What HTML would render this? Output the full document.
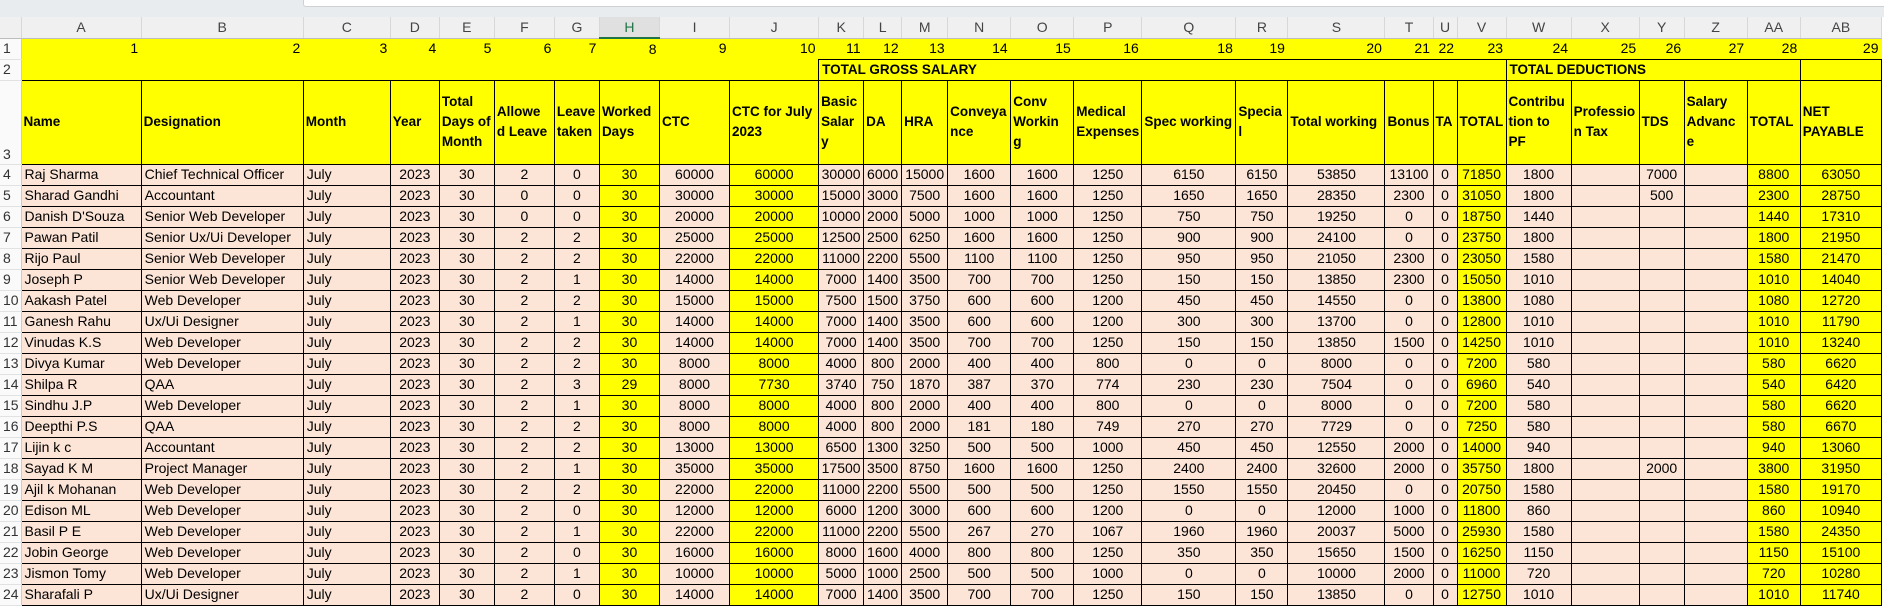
<!DOCTYPE html>
<html><head><meta charset="utf-8"><style>
*{box-sizing:border-box}
body{margin:0;width:1884px;height:606px;overflow:hidden;background:#fff;font-family:"Liberation Sans",sans-serif;position:relative}
#top{position:absolute;left:0;top:0;width:1884px;height:17px;background:#e9ecef}
#fb{position:absolute;left:303px;top:0;width:1581px;height:7px;background:#fff;border-bottom:1px solid #d0d0d0;border-left:1px solid #d0d0d0;border-bottom-left-radius:3px}
table{position:absolute;left:0;top:17px;border-collapse:collapse;table-layout:fixed;width:1882px}
td,th{padding:0 2px;height:21px;font-size:14px;white-space:nowrap;overflow:hidden;line-height:19px}
tr.ch th{background:#f0f0f0;color:#444;font-weight:normal;text-align:center;border-right:1px solid #d8d8d8;border-bottom:1px solid #bdbdbd;font-size:14px}
tr.ch th.sel{background:#e0e0e0;color:#217346;border-bottom:2px solid #217346}
th.rh{background:#fafafa;color:#333;font-weight:normal;text-align:left;padding-left:3px;border:none;border-right:1px solid #ccc;border-bottom:1px solid #e2e2e2;font-size:14px}
tr.r1 td{background:#ff0;text-align:right;padding-right:3px;border:none}
tr.r2 td{background:#ff0;border:none;border-bottom:1px solid #000}
tr.r2 td.b{border:1px solid #000;font-weight:bold;font-size:13.5px;padding-left:3px}
tr.r3 td{background:#ff0;border:1px solid #000;font-weight:bold;font-size:13.5px;line-height:20px;vertical-align:middle;padding-left:2px;height:84px}
tr.d td{background:#fce4d6;border:1px solid #000;text-align:center}
tr.d td.l{text-align:left;padding-left:3px}
tr.d td.y{background:#ff0}
</style></head><body>
<div id="top"><div id="fb"></div></div>
<table>
<colgroup>
<col style="width:21px"><col style="width:120px"><col style="width:162px"><col style="width:87px"><col style="width:49px"><col style="width:55px"><col style="width:60px"><col style="width:45px"><col style="width:60px"><col style="width:70px"><col style="width:89px"><col style="width:45px"><col style="width:38px"><col style="width:46px"><col style="width:63px"><col style="width:63px"><col style="width:68px"><col style="width:94px"><col style="width:52px"><col style="width:97px"><col style="width:48px"><col style="width:24px"><col style="width:49px"><col style="width:65px"><col style="width:68px"><col style="width:45px"><col style="width:63px"><col style="width:53px"><col style="width:81px">
</colgroup>
<tr class="ch"><th style="background:#f0f0f0"></th><th>A</th><th>B</th><th>C</th><th>D</th><th>E</th><th>F</th><th>G</th><th class="sel">H</th><th>I</th><th>J</th><th>K</th><th>L</th><th>M</th><th>N</th><th>O</th><th>P</th><th>Q</th><th>R</th><th>S</th><th>T</th><th>U</th><th>V</th><th>W</th><th>X</th><th>Y</th><th>Z</th><th>AA</th><th>AB</th></tr>
<tr class="r1"><th class="rh">1</th><td>1</td><td>2</td><td>3</td><td>4</td><td>5</td><td>6</td><td>7</td><td>8</td><td>9</td><td>10</td><td>11</td><td>12</td><td>13</td><td>14</td><td>15</td><td>16</td><td>18</td><td>19</td><td>20</td><td>21</td><td>22</td><td>23</td><td>24</td><td>25</td><td>26</td><td>27</td><td>28</td><td>29</td></tr>
<tr class="r2"><th class="rh">2</th><td></td><td></td><td></td><td></td><td></td><td></td><td></td><td></td><td></td><td></td><td class="b" colspan="12">TOTAL GROSS SALARY</td><td class="b" colspan="5">TOTAL DEDUCTIONS</td><td class="b"></td></tr>
<tr class="r3"><th class="rh" style="vertical-align:bottom;height:84px">3</th><td>Name</td><td>Designation</td><td>Month</td><td>Year</td><td>Total<br>Days of<br>Month</td><td>Allowe<br>d Leave</td><td>Leave<br>taken</td><td>Worked<br>Days</td><td>CTC</td><td>CTC for July<br>2023</td><td>Basic<br>Salar<br>y</td><td>DA</td><td>HRA</td><td>Conveya<br>nce</td><td>Conv<br>Workin<br>g</td><td>Medical<br>Expenses</td><td>Spec working</td><td>Specia<br>l</td><td>Total working</td><td>Bonus</td><td>TA</td><td>TOTAL</td><td>Contribu<br>tion to<br>PF</td><td>Professio<br>n Tax</td><td>TDS</td><td>Salary<br>Advanc<br>e</td><td>TOTAL</td><td>NET<br>PAYABLE</td></tr>
<tr class="d"><th class="rh">4</th><td class="l">Raj Sharma</td><td class="l">Chief Technical Officer</td><td class="l">July</td><td>2023</td><td>30</td><td>2</td><td>0</td><td class="y">30</td><td>60000</td><td class="y">60000</td><td>30000</td><td>6000</td><td>15000</td><td>1600</td><td>1600</td><td>1250</td><td>6150</td><td>6150</td><td>53850</td><td>13100</td><td>0</td><td class="y">71850</td><td>1800</td><td></td><td>7000</td><td></td><td class="y">8800</td><td class="y">63050</td></tr>
<tr class="d"><th class="rh">5</th><td class="l">Sharad Gandhi</td><td class="l">Accountant</td><td class="l">July</td><td>2023</td><td>30</td><td>0</td><td>0</td><td class="y">30</td><td>30000</td><td class="y">30000</td><td>15000</td><td>3000</td><td>7500</td><td>1600</td><td>1600</td><td>1250</td><td>1650</td><td>1650</td><td>28350</td><td>2300</td><td>0</td><td class="y">31050</td><td>1800</td><td></td><td>500</td><td></td><td class="y">2300</td><td class="y">28750</td></tr>
<tr class="d"><th class="rh">6</th><td class="l">Danish D'Souza</td><td class="l">Senior Web Developer</td><td class="l">July</td><td>2023</td><td>30</td><td>0</td><td>0</td><td class="y">30</td><td>20000</td><td class="y">20000</td><td>10000</td><td>2000</td><td>5000</td><td>1000</td><td>1000</td><td>1250</td><td>750</td><td>750</td><td>19250</td><td>0</td><td>0</td><td class="y">18750</td><td>1440</td><td></td><td></td><td></td><td class="y">1440</td><td class="y">17310</td></tr>
<tr class="d"><th class="rh">7</th><td class="l">Pawan Patil</td><td class="l">Senior Ux/Ui Developer</td><td class="l">July</td><td>2023</td><td>30</td><td>2</td><td>2</td><td class="y">30</td><td>25000</td><td class="y">25000</td><td>12500</td><td>2500</td><td>6250</td><td>1600</td><td>1600</td><td>1250</td><td>900</td><td>900</td><td>24100</td><td>0</td><td>0</td><td class="y">23750</td><td>1800</td><td></td><td></td><td></td><td class="y">1800</td><td class="y">21950</td></tr>
<tr class="d"><th class="rh">8</th><td class="l">Rijo Paul</td><td class="l">Senior Web Developer</td><td class="l">July</td><td>2023</td><td>30</td><td>2</td><td>2</td><td class="y">30</td><td>22000</td><td class="y">22000</td><td>11000</td><td>2200</td><td>5500</td><td>1100</td><td>1100</td><td>1250</td><td>950</td><td>950</td><td>21050</td><td>2300</td><td>0</td><td class="y">23050</td><td>1580</td><td></td><td></td><td></td><td class="y">1580</td><td class="y">21470</td></tr>
<tr class="d"><th class="rh">9</th><td class="l">Joseph P</td><td class="l">Senior Web Developer</td><td class="l">July</td><td>2023</td><td>30</td><td>2</td><td>1</td><td class="y">30</td><td>14000</td><td class="y">14000</td><td>7000</td><td>1400</td><td>3500</td><td>700</td><td>700</td><td>1250</td><td>150</td><td>150</td><td>13850</td><td>2300</td><td>0</td><td class="y">15050</td><td>1010</td><td></td><td></td><td></td><td class="y">1010</td><td class="y">14040</td></tr>
<tr class="d"><th class="rh">10</th><td class="l">Aakash Patel</td><td class="l">Web Developer</td><td class="l">July</td><td>2023</td><td>30</td><td>2</td><td>2</td><td class="y">30</td><td>15000</td><td class="y">15000</td><td>7500</td><td>1500</td><td>3750</td><td>600</td><td>600</td><td>1200</td><td>450</td><td>450</td><td>14550</td><td>0</td><td>0</td><td class="y">13800</td><td>1080</td><td></td><td></td><td></td><td class="y">1080</td><td class="y">12720</td></tr>
<tr class="d"><th class="rh">11</th><td class="l">Ganesh Rahu</td><td class="l">Ux/Ui Designer</td><td class="l">July</td><td>2023</td><td>30</td><td>2</td><td>1</td><td class="y">30</td><td>14000</td><td class="y">14000</td><td>7000</td><td>1400</td><td>3500</td><td>600</td><td>600</td><td>1200</td><td>300</td><td>300</td><td>13700</td><td>0</td><td>0</td><td class="y">12800</td><td>1010</td><td></td><td></td><td></td><td class="y">1010</td><td class="y">11790</td></tr>
<tr class="d"><th class="rh">12</th><td class="l">Vinudas K.S</td><td class="l">Web Developer</td><td class="l">July</td><td>2023</td><td>30</td><td>2</td><td>2</td><td class="y">30</td><td>14000</td><td class="y">14000</td><td>7000</td><td>1400</td><td>3500</td><td>700</td><td>700</td><td>1250</td><td>150</td><td>150</td><td>13850</td><td>1500</td><td>0</td><td class="y">14250</td><td>1010</td><td></td><td></td><td></td><td class="y">1010</td><td class="y">13240</td></tr>
<tr class="d"><th class="rh">13</th><td class="l">Divya Kumar</td><td class="l">Web Developer</td><td class="l">July</td><td>2023</td><td>30</td><td>2</td><td>2</td><td class="y">30</td><td>8000</td><td class="y">8000</td><td>4000</td><td>800</td><td>2000</td><td>400</td><td>400</td><td>800</td><td>0</td><td>0</td><td>8000</td><td>0</td><td>0</td><td class="y">7200</td><td>580</td><td></td><td></td><td></td><td class="y">580</td><td class="y">6620</td></tr>
<tr class="d"><th class="rh">14</th><td class="l">Shilpa R</td><td class="l">QAA</td><td class="l">July</td><td>2023</td><td>30</td><td>2</td><td>3</td><td class="y">29</td><td>8000</td><td class="y">7730</td><td>3740</td><td>750</td><td>1870</td><td>387</td><td>370</td><td>774</td><td>230</td><td>230</td><td>7504</td><td>0</td><td>0</td><td class="y">6960</td><td>540</td><td></td><td></td><td></td><td class="y">540</td><td class="y">6420</td></tr>
<tr class="d"><th class="rh">15</th><td class="l">Sindhu J.P</td><td class="l">Web Developer</td><td class="l">July</td><td>2023</td><td>30</td><td>2</td><td>1</td><td class="y">30</td><td>8000</td><td class="y">8000</td><td>4000</td><td>800</td><td>2000</td><td>400</td><td>400</td><td>800</td><td>0</td><td>0</td><td>8000</td><td>0</td><td>0</td><td class="y">7200</td><td>580</td><td></td><td></td><td></td><td class="y">580</td><td class="y">6620</td></tr>
<tr class="d"><th class="rh">16</th><td class="l">Deepthi P.S</td><td class="l">QAA</td><td class="l">July</td><td>2023</td><td>30</td><td>2</td><td>2</td><td class="y">30</td><td>8000</td><td class="y">8000</td><td>4000</td><td>800</td><td>2000</td><td>181</td><td>180</td><td>749</td><td>270</td><td>270</td><td>7729</td><td>0</td><td>0</td><td class="y">7250</td><td>580</td><td></td><td></td><td></td><td class="y">580</td><td class="y">6670</td></tr>
<tr class="d"><th class="rh">17</th><td class="l">Lijin k c</td><td class="l">Accountant</td><td class="l">July</td><td>2023</td><td>30</td><td>2</td><td>2</td><td class="y">30</td><td>13000</td><td class="y">13000</td><td>6500</td><td>1300</td><td>3250</td><td>500</td><td>500</td><td>1000</td><td>450</td><td>450</td><td>12550</td><td>2000</td><td>0</td><td class="y">14000</td><td>940</td><td></td><td></td><td></td><td class="y">940</td><td class="y">13060</td></tr>
<tr class="d"><th class="rh">18</th><td class="l">Sayad K M</td><td class="l">Project Manager</td><td class="l">July</td><td>2023</td><td>30</td><td>2</td><td>1</td><td class="y">30</td><td>35000</td><td class="y">35000</td><td>17500</td><td>3500</td><td>8750</td><td>1600</td><td>1600</td><td>1250</td><td>2400</td><td>2400</td><td>32600</td><td>2000</td><td>0</td><td class="y">35750</td><td>1800</td><td></td><td>2000</td><td></td><td class="y">3800</td><td class="y">31950</td></tr>
<tr class="d"><th class="rh">19</th><td class="l">Ajil k Mohanan</td><td class="l">Web Developer</td><td class="l">July</td><td>2023</td><td>30</td><td>2</td><td>2</td><td class="y">30</td><td>22000</td><td class="y">22000</td><td>11000</td><td>2200</td><td>5500</td><td>500</td><td>500</td><td>1250</td><td>1550</td><td>1550</td><td>20450</td><td>0</td><td>0</td><td class="y">20750</td><td>1580</td><td></td><td></td><td></td><td class="y">1580</td><td class="y">19170</td></tr>
<tr class="d"><th class="rh">20</th><td class="l">Edison ML</td><td class="l">Web Developer</td><td class="l">July</td><td>2023</td><td>30</td><td>2</td><td>0</td><td class="y">30</td><td>12000</td><td class="y">12000</td><td>6000</td><td>1200</td><td>3000</td><td>600</td><td>600</td><td>1200</td><td>0</td><td>0</td><td>12000</td><td>1000</td><td>0</td><td class="y">11800</td><td>860</td><td></td><td></td><td></td><td class="y">860</td><td class="y">10940</td></tr>
<tr class="d"><th class="rh">21</th><td class="l">Basil P E</td><td class="l">Web Developer</td><td class="l">July</td><td>2023</td><td>30</td><td>2</td><td>1</td><td class="y">30</td><td>22000</td><td class="y">22000</td><td>11000</td><td>2200</td><td>5500</td><td>267</td><td>270</td><td>1067</td><td>1960</td><td>1960</td><td>20037</td><td>5000</td><td>0</td><td class="y">25930</td><td>1580</td><td></td><td></td><td></td><td class="y">1580</td><td class="y">24350</td></tr>
<tr class="d"><th class="rh">22</th><td class="l">Jobin George</td><td class="l">Web Developer</td><td class="l">July</td><td>2023</td><td>30</td><td>2</td><td>0</td><td class="y">30</td><td>16000</td><td class="y">16000</td><td>8000</td><td>1600</td><td>4000</td><td>800</td><td>800</td><td>1250</td><td>350</td><td>350</td><td>15650</td><td>1500</td><td>0</td><td class="y">16250</td><td>1150</td><td></td><td></td><td></td><td class="y">1150</td><td class="y">15100</td></tr>
<tr class="d"><th class="rh">23</th><td class="l">Jismon Tomy</td><td class="l">Web Developer</td><td class="l">July</td><td>2023</td><td>30</td><td>2</td><td>1</td><td class="y">30</td><td>10000</td><td class="y">10000</td><td>5000</td><td>1000</td><td>2500</td><td>500</td><td>500</td><td>1000</td><td>0</td><td>0</td><td>10000</td><td>2000</td><td>0</td><td class="y">11000</td><td>720</td><td></td><td></td><td></td><td class="y">720</td><td class="y">10280</td></tr>
<tr class="d"><th class="rh">24</th><td class="l">Sharafali P</td><td class="l">Ux/Ui Designer</td><td class="l">July</td><td>2023</td><td>30</td><td>2</td><td>0</td><td class="y">30</td><td>14000</td><td class="y">14000</td><td>7000</td><td>1400</td><td>3500</td><td>700</td><td>700</td><td>1250</td><td>150</td><td>150</td><td>13850</td><td>0</td><td>0</td><td class="y">12750</td><td>1010</td><td></td><td></td><td></td><td class="y">1010</td><td class="y">11740</td></tr>
</table>
</body></html>
